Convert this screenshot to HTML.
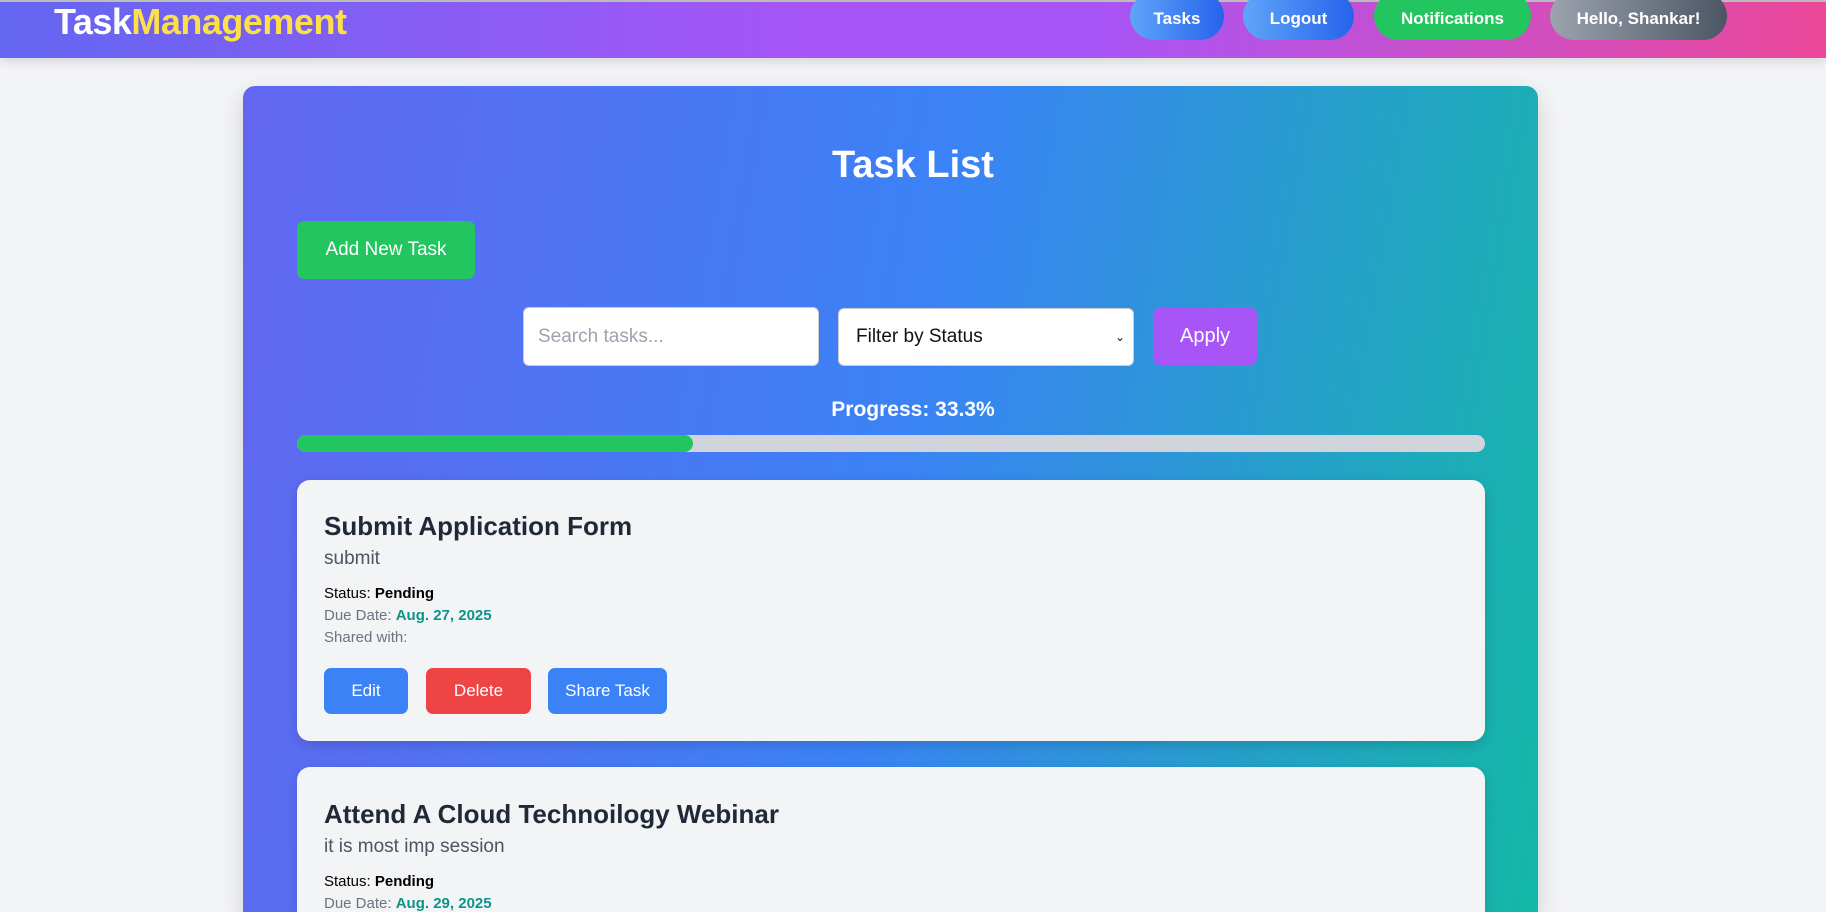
<!DOCTYPE html>
<html><head><meta charset="utf-8"><style>
*{box-sizing:border-box;margin:0;padding:0}
html,body{width:1826px;height:912px;overflow:hidden}
body{background:#f3f4f6;font-family:"Liberation Sans","DejaVu Sans",sans-serif;position:relative}
.nav{position:absolute;left:0;top:0;width:1826px;height:58px;background:linear-gradient(90deg,#6366f1,#a855f7 45%,#a855f7 60%,#ec4899);box-shadow:0 4px 10px rgba(0,0,0,.12);border-top:2px solid #bbb}
.logo{position:absolute;left:54px;top:-1px;font-size:36px;font-weight:bold;color:#fff;letter-spacing:-0.5px}
.logo span{color:#fde047}
.nb{position:absolute;top:-10px;height:48px;border-radius:24px;color:#fff;font-weight:bold;font-size:17px;display:flex;align-items:center;justify-content:center;padding-top:6px}
.main{position:absolute;left:243px;top:86px;width:1295px;height:826px;border-radius:12px 12px 0 0;background:linear-gradient(100deg,#6366f1,#3b82f6 50%,#14b8a6);box-shadow:0 8px 24px rgba(0,0,0,.15)}
.abs{position:absolute}
h1{position:absolute;left:0;width:100%;text-align:center;color:#fff;font-size:38px;font-weight:bold}
.btn{position:absolute;display:flex;align-items:center;justify-content:center;color:#fff;border-radius:7px}
.inp{position:absolute;background:#fff;border:1px solid #ccc;border-radius:6px;font-size:19px;display:flex;align-items:center;padding-left:14px}
.card{position:absolute;left:297px;width:1188px;background:#f3f4f6;border-radius:13px;box-shadow:0 4px 12px rgba(0,0,0,.15);overflow:hidden}
.t{position:absolute;left:27px;font-size:26px;font-weight:bold;color:#1f2937}
.d{position:absolute;left:27px;font-size:19px;color:#4b5563}
.s{position:absolute;left:27px;font-size:15px;color:#6b7280}
.s b{color:#000}
.s .g{color:#0d9488}
</style></head><body>
<div class="nav">
<div class="logo">Task<span>Management</span></div>
<div class="nb" style="left:1130px;width:94px;background:linear-gradient(90deg,#60a5fa,#2563eb)">Tasks</div>
<div class="nb" style="left:1243px;width:111px;background:linear-gradient(90deg,#60a5fa,#2563eb)">Logout</div>
<div class="nb" style="left:1374px;width:157px;background:#22c55e">Notifications</div>
<div class="nb" style="left:1550px;width:177px;background:linear-gradient(90deg,#9ca3af,#4b5563)">Hello, Shankar!</div>
</div>
<div class="main"></div>
<h1 style="top:144px">Task List</h1>
<div class="btn" style="left:297px;top:221px;width:178px;height:58px;background:#22c55e;font-size:19px">Add New Task</div>
<div class="inp" style="left:523px;top:307px;width:296px;height:59px;color:#9ca3af">Search tasks...</div>
<div class="inp" style="left:838px;top:308px;width:296px;height:58px;color:#111;padding-left:17px">Filter by Status<span style="position:absolute;right:8px;font-size:12px">&#8964;</span></div>
<div class="btn" style="left:1153px;top:308px;width:104px;height:57px;background:#a855f7;font-size:20px">Apply</div>
<div class="abs" style="left:0;width:1826px;top:398px;text-align:center;color:#fff;font-size:21px;font-weight:bold">Progress: 33.3%</div>
<div class="abs" style="left:297px;top:435px;width:1188px;height:17px;border-radius:9px;background:#d1d5db;overflow:hidden"><div style="width:396px;height:100%;background:#22c55e;border-radius:9px"></div></div>
<div class="card" style="top:480px;height:261px">
<div class="t" style="top:31px">Submit Application Form</div>
<div class="d" style="top:68px">submit</div>
<div class="s" style="top:105px;color:#000">Status: <b>Pending</b></div>
<div class="s" style="top:127px">Due Date: <b class="g">Aug. 27, 2025</b></div>
<div class="s" style="top:149px">Shared with:</div>
<div class="btn" style="left:27px;top:188px;width:84px;height:46px;background:#3b82f6;font-size:17px">Edit</div>
<div class="btn" style="left:129px;top:188px;width:105px;height:46px;background:#ef4444;font-size:17px">Delete</div>
<div class="btn" style="left:251px;top:188px;width:119px;height:46px;background:#3b82f6;font-size:17px">Share Task</div>
</div>
<div class="card" style="top:767px;height:145px;border-radius:13px 13px 0 0">
<div class="t" style="top:32px">Attend A Cloud Technoilogy Webinar</div>
<div class="d" style="top:69px">it is most imp session</div>
<div class="s" style="top:106px;color:#000">Status: <b>Pending</b></div>
<div class="s" style="top:128px">Due Date: <b class="g">Aug. 29, 2025</b></div>
</div>
</body></html>
